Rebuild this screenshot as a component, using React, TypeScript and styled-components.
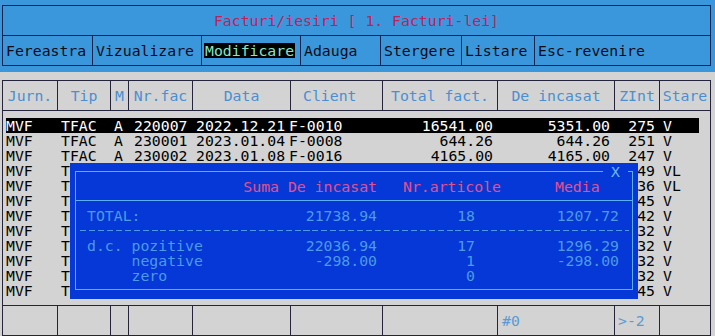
import React from "react";
import styled, { createGlobalStyle } from "styled-components";

const GlobalStyle = createGlobalStyle`
  html, body { margin: 0; padding: 0; background: #d3d3d3; }
  body { font-family: "DejaVu Sans Mono", "Liberation Mono", monospace; }
  * { box-sizing: border-box; }
`;

const Screen = styled.div`
  position: relative;
  width: 715px;
  height: 336px;
  overflow: hidden;
  background: #d3d3d3;
  font-family: "DejaVu Sans Mono", "Liberation Mono", monospace;
  font-size: 14.8px;
  line-height: 15px;
`;

const TopBar = styled.div`
  height: 72px;
  background: #3b97dc;
  padding: 5px 0 0 2px;
`;

const TitleBox = styled.div`
  width: 709px;
  border: 1px solid #13244f;
`;

const TitleRow = styled.div`
  height: 30px;
  border-bottom: 1px solid #13244f;
  display: flex;
  align-items: center;
  justify-content: center;
  color: #c0205a;
  white-space: pre;
`;

const MenuRow = styled.div`
  height: 29px;
  display: flex;
`;

const MenuItem = styled.div<{ $w?: number }>`
  ${(p) => (p.$w ? `width: ${p.$w}px; border-right: 1px solid #13244f;` : "flex: 1;")}
  display: flex;
  align-items: center;
  padding-left: 2px;
`;

const MenuLabel = styled.span<{ $active?: boolean }>`
  padding: 0 1px;
  color: ${(p) => (p.$active ? "#84e6c6" : "#0b0b18")};
  background: ${(p) => (p.$active ? "#000" : "transparent")};
`;

const Table = styled.div`
  margin: 8px 0 0 2px;
  width: 709px;
  height: 256px;
  border: 1px solid #24243c;
  display: flex;
  flex-direction: column;
`;

const COLS = "55px 53px 18px 64px 98px 92px 115px 117px 45px 1fr";

const HeaderRow = styled.div`
  height: 30px;
  border-bottom: 1px solid #24243c;
  display: grid;
  grid-template-columns: ${COLS};
`;

const HeaderCell = styled.div<{ $last?: boolean; $left?: number }>`
  border-right: ${(p) => (p.$last ? "none" : "1px solid #24243c")};
  display: flex;
  align-items: center;
  justify-content: ${(p) => (p.$left != null ? "flex-start" : "center")};
  padding-left: ${(p) => p.$left ?? 0}px;
  color: #4a8fd2;
  white-space: pre;
`;

const Body = styled.div`
  flex: 1;
  padding-top: 7px;
  border-bottom: 1px solid #24243c;
`;

const DataRow = styled.div<{ $sel?: boolean }>`
  margin-left: 3px;
  width: 693px;
  height: 15px;
  display: grid;
  grid-template-columns: 55px 53px 19px 62px 94px 110px 94px 117px 45px 1fr;
  background: ${(p) => (p.$sel ? "#000" : "transparent")};
  color: ${(p) => (p.$sel ? "#fff" : "#000")};
  white-space: pre;
`;

const Cell = styled.span<{ $right?: boolean; $pad?: number }>`
  text-align: ${(p) => (p.$right ? "right" : "left")};
  padding-left: ${(p) => p.$pad ?? 0}px;
  overflow: hidden;
`;

const StatusRow = styled.div`
  height: 29px;
  display: grid;
  grid-template-columns: ${COLS};
`;

const StatusCell = styled.div<{ $last?: boolean; $pad?: number }>`
  border-right: ${(p) => (p.$last ? "none" : "1px solid #24243c")};
  display: flex;
  align-items: center;
  padding-left: ${(p) => p.$pad ?? 4}px;
  color: #5b9ad6;
`;

const Dialog = styled.div`
  position: absolute;
  left: 70px;
  top: 163px;
  width: 568px;
  height: 136px;
  padding: 8px 5px 9px 5px;
  background: #0538d6;
`;

const DialogFrame = styled.div`
  position: relative;
  height: 100%;
  border: 1px solid #5ab0f0;
`;

const CloseMark = styled.span`
  position: absolute;
  top: -8px;
  right: 4px;
  width: 25px;
  height: 15px;
  background: #0538d6;
  color: #6cbcf4;
  text-align: center;
`;

const DialogHead = styled.div`
  height: 29px;
  border-bottom: 1px solid #5ab0f0;
  padding-left: 11px;
  display: grid;
  grid-template-columns: 290px 178px 1fr;
  align-items: center;
  color: #e4508e;
  white-space: pre;
`;

const HeadCell = styled.span<{ $right?: boolean; $pad?: number }>`
  text-align: ${(p) => (p.$right ? "right" : "left")};
  padding-left: ${(p) => p.$pad ?? 0}px;
`;

const DialogBody = styled.div`
  padding: 7px 0 0 11px;
  color: #4e9ae6;
`;

const StatRow = styled.div`
  height: 15px;
  display: grid;
  grid-template-columns: 158px 132px 98px 144px;
  white-space: pre;
`;

const StatCell = styled.span<{ $right?: boolean }>`
  text-align: ${(p) => (p.$right ? "right" : "left")};
`;

const Dashes = styled.div`
  height: 1px;
  margin: 7px 3px 7px -7px;
  background: repeating-linear-gradient(
    to right,
    #4e9ae6 0px,
    #4e9ae6 6px,
    transparent 6px,
    transparent 8.94px
  );
`;

type Row = {
  j: string; t: string; m?: string; nr?: string; d?: string; c?: string;
  tot?: string; inc?: string; z: string; s: string;
};

// Rows 4..12 are mostly hidden under the summary window; only the
// visible parts are kept.
const rows: Row[] = [
  { j: "MVF", t: "TFAC", m: "A", nr: "220007", d: "2022.12.21", c: "F-0010", tot: "16541.00", inc: "5351.00", z: "275", s: "V" },
  { j: "MVF", t: "TFAC", m: "A", nr: "230001", d: "2023.01.04", c: "F-0008", tot: "644.26", inc: "644.26", z: "251", s: "V" },
  { j: "MVF", t: "TFAC", m: "A", nr: "230002", d: "2023.01.08", c: "F-0016", tot: "4165.00", inc: "4165.00", z: "247", s: "V" },
  { j: "MVF", t: "T", z: "49", s: "VL" },
  { j: "MVF", t: "T", z: "36", s: "VL" },
  { j: "MVF", t: "T", z: "45", s: "V" },
  { j: "MVF", t: "T", z: "42", s: "V" },
  { j: "MVF", t: "T", z: "32", s: "V" },
  { j: "MVF", t: "T", z: "32", s: "V" },
  { j: "MVF", t: "T", z: "32", s: "V" },
  { j: "MVF", t: "T", z: "32", s: "V" },
  { j: "MVF", t: "T", z: "45", s: "V" },
];

const menu: { label: string; w?: number; active?: boolean }[] = [
  { label: "Fereastra", w: 90 },
  { label: "Vizualizare", w: 109 },
  { label: "Modificare", w: 99, active: true },
  { label: "Adauga", w: 80 },
  { label: "Stergere", w: 81 },
  { label: "Listare", w: 73 },
  { label: "Esc-revenire" },
];

const headers: { t: string; left?: number }[] = [
  { t: "Jurn." }, { t: "Tip" }, { t: "M" }, { t: "Nr.fac" }, { t: "Data" },
  { t: "Client", left: 12 }, { t: "Total fact." }, { t: "De incasat" }, { t: "ZInt" }, { t: "Stare" },
];

const stats = [
  { label: "TOTAL:", suma: "21738.94", nr: "18", media: "1207.72" },
  { label: "d.c. pozitive", suma: "22036.94", nr: "17", media: "1296.29" },
  { label: "     negative", suma: "-298.00", nr: "1", media: "-298.00" },
  { label: "     zero", suma: "", nr: "0", media: "" },
];

export default function App() {
  return (
    <Screen>
      <GlobalStyle />
      <TopBar>
        <TitleBox>
          <TitleRow>Facturi/iesiri [ 1. Facturi-lei]</TitleRow>
          <MenuRow>
            {menu.map((m) => (
              <MenuItem key={m.label} $w={m.w}>
                <MenuLabel $active={m.active}>{m.label}</MenuLabel>
              </MenuItem>
            ))}
          </MenuRow>
        </TitleBox>
      </TopBar>
      <Table>
        <HeaderRow>
          {headers.map((h, i) => (
            <HeaderCell key={h.t} $last={i === headers.length - 1} $left={h.left}>{h.t}</HeaderCell>
          ))}
        </HeaderRow>
        <Body>
          {rows.map((r, i) => (
            <DataRow key={i} $sel={i === 0}>
              <Cell>{r.j}</Cell>
              <Cell>{r.t}</Cell>
              <Cell>{r.m}</Cell>
              <Cell $pad={1}>{r.nr}</Cell>
              <Cell $pad={1}>{r.d}</Cell>
              <Cell>{r.c}</Cell>
              <Cell $right>{r.tot}</Cell>
              <Cell $right>{r.inc}</Cell>
              <Cell $right>{r.z}</Cell>
              <Cell $pad={8}>{r.s}</Cell>
            </DataRow>
          ))}
        </Body>
        <StatusRow>
          <StatusCell />
          <StatusCell />
          <StatusCell />
          <StatusCell />
          <StatusCell />
          <StatusCell />
          <StatusCell />
          <StatusCell $pad={4}>#0</StatusCell>
          <StatusCell $pad={3}>&gt;-2</StatusCell>
          <StatusCell $last />
        </StatusRow>
      </Table>
      <Dialog>
        <DialogFrame>
          <CloseMark>X</CloseMark>
          <DialogHead>
            <HeadCell $right>Suma De incasat</HeadCell>
            <HeadCell $pad={26}>Nr.articole</HeadCell>
            <HeadCell>Media</HeadCell>
          </DialogHead>
          <DialogBody>
            <StatRow>
              <StatCell>{stats[0].label}</StatCell>
              <StatCell $right>{stats[0].suma}</StatCell>
              <StatCell $right>{stats[0].nr}</StatCell>
              <StatCell $right>{stats[0].media}</StatCell>
            </StatRow>
            <Dashes />
            {stats.slice(1).map((s) => (
              <StatRow key={s.label}>
                <StatCell>{s.label}</StatCell>
                <StatCell $right>{s.suma}</StatCell>
                <StatCell $right>{s.nr}</StatCell>
                <StatCell $right>{s.media}</StatCell>
              </StatRow>
            ))}
          </DialogBody>
        </DialogFrame>
      </Dialog>
    </Screen>
  );
}
